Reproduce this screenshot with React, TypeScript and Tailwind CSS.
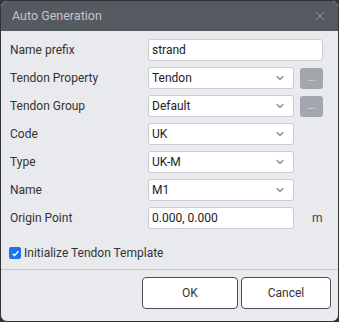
import { ChevronDown, X } from "lucide-react";

const font = { fontFamily: '"Roboto", "Noto Sans", sans-serif' };

function Row({ label, children }: { label: string; children: React.ReactNode }) {
  return (
    <div className="flex items-center h-[22px]">
      <div className="w-[138px] text-[12px] text-[#333]">{label}</div>
      <div className="flex-1 flex items-center">{children}</div>
    </div>
  );
}

function Select({ value }: { value: string }) {
  return (
    <div className="w-[146px] h-[22px] bg-white border border-[#c9cdd3] rounded-[3px] flex items-center justify-between pl-[3px] pr-[7px] text-[12px] text-[#222]">
      <span>{value}</span>
      <ChevronDown size={12} strokeWidth={2.8} className="text-[#8a8f96]" />
    </div>
  );
}

function Dots() {
  return (
    <div className="ml-[6px] w-[23px] h-[21px] rounded-[3px] bg-[#a2a7ae] text-[#eef0f2] text-[10px] flex items-center justify-center leading-none">
      ...
    </div>
  );
}

export default function App() {
  return (
    <div style={font} className="w-[339px] h-[322px] bg-[#2f3338]">
      <div className="w-full h-full rounded-[7px] border border-[#2f3338] overflow-hidden flex flex-col bg-[#e9eaed]">
        {/* Title */}
        <div className="h-[30px] bg-[#555a61] flex items-center justify-between pl-[11px] pr-[10px]">
          <span className="text-[12.5px] text-[#c2c6cb]">Auto Generation</span>
          <X size={16} strokeWidth={1.2} className="text-[#a3a8ae]" />
        </div>

        {/* Form */}
        <div className="flex flex-col gap-[6px] pl-[9px] pr-[14px] pt-[8px]">
          <Row label="Name prefix">
            <div className="w-[175px] h-[22px] bg-white border border-[#c9cdd3] rounded-[3px] pl-[3px] text-[12px] text-[#222] flex items-center">
              strand
            </div>
          </Row>
          <Row label="Tendon Property">
            <Select value="Tendon" />
            <Dots />
          </Row>
          <Row label="Tendon Group">
            <Select value="Default" />
            <Dots />
          </Row>
          <Row label="Code">
            <Select value="UK" />
          </Row>
          <Row label="Type">
            <Select value="UK-M" />
          </Row>
          <Row label="Name">
            <Select value="M1" />
          </Row>
          <Row label="Origin Point">
            <div className="w-[146px] h-[22px] bg-white border border-[#c9cdd3] rounded-[3px] pl-[3px] text-[12px] text-[#222] flex items-center">
              0.000, 0.000
            </div>
            <span className="ml-[18px] text-[12px] text-[#444]">m</span>
          </Row>
        </div>

        <div className="flex items-center gap-[3px] pl-[8px] mt-[14px] h-[20px]">
          <div className="w-[12px] h-[12px] rounded-[2px] bg-[#1a73e8] flex items-center justify-center">
            <svg width="9" height="9" viewBox="0 0 10 10">
              <path d="M1.8 5.2 L4 7.3 L8.3 2.6" stroke="white" strokeWidth="1.6" fill="none" />
            </svg>
          </div>
          <span className="text-[12px] text-[#333]">Initialize Tendon Template</span>
        </div>

        {/* Footer */}
        <div className="mt-[6px] border-t border-[#c6c9ce] flex justify-end gap-[3px] pt-[7px] pr-[7px]">
          <div className="w-[96px] h-[32px] bg-white border border-[#4a4e54] rounded-[4px] flex items-center justify-center text-[12px] text-[#333]">
            OK
          </div>
          <div className="w-[90px] h-[32px] bg-white border border-[#4a4e54] rounded-[4px] flex items-center justify-center text-[12px] text-[#333]">
            Cancel
          </div>
        </div>
      </div>
    </div>
  );
}
